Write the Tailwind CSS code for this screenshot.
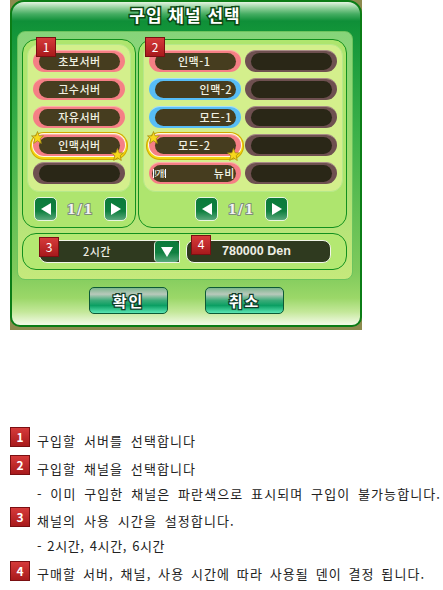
<!DOCTYPE html>
<html lang="ko">
<head>
<meta charset="utf-8">
<script src="https://cdn.jsdelivr.net/npm/@tailwindcss/browser@4"></script>
</head>
<body class="bg-white w-[443px] h-[590px] overflow-hidden font-['Noto_Sans_CJK_KR','Noto_Sans',sans-serif]">
<div class="ml-[10px] w-[352px] h-[330px] bg-[#8c8a4e]">
  <div class="w-[352px] h-[327px] rounded-t-[14px] rounded-b-[10px] border-2 border-[#0b7d16] bg-[linear-gradient(180deg,#e4f5e2_0px,#8fd09a_6px,#45ad62_12px,#0f8f38_19px,#129539_29px,#3bb049_130px,#7fca5c_270px,#9bd768_296px,#c4e89a_310px,#f1f9e4_322px)] relative">
    <div class="h-[29px] flex items-center justify-center pr-[2px] pb-[4px] text-[17px] font-bold leading-none tracking-[1px] text-white [-webkit-text-stroke:3px_#0d4a14] [paint-order:stroke_fill]">구입 채널 선택</div>

    <div class="ml-[5px] w-[336px] h-[249px] rounded-[8px] border border-[#6cc45e] bg-[linear-gradient(180deg,#86d47a_0px,#9cdc72_100px,#c6e97c_249px)] pt-[7px] px-[4px]">
      <div class="flex gap-[2px]">
        <div class="w-[114px] h-[189px] rounded-[14px] border border-[#12901e] bg-[#aee56e] pt-[4px] px-[4px]">
          <div class="w-[104px] h-[148px] rounded-[12px] border border-[#b6e88a] bg-[#d4ef8c] pt-[5px] pl-[5px] flex flex-col gap-[6px]">
            <div class="w-[92px] h-[22px] rounded-full bg-[#f57f85] border-t border-[#fbb0a8] pl-[6px] pr-[5px] pt-[2px] pb-[2px]"><div class="h-full rounded-full bg-[#463d1f] flex items-center justify-center text-[11px] font-medium leading-none tracking-[0.5px] text-[#f1f1e2]">초보서버</div></div>
            <div class="w-[92px] h-[22px] rounded-full bg-[#f57f85] border-t border-[#fbb0a8] pl-[6px] pr-[5px] pt-[2px] pb-[2px]"><div class="h-full rounded-full bg-[#463d1f] flex items-center justify-center text-[11px] font-medium leading-none tracking-[0.5px] text-[#f1f1e2]">고수서버</div></div>
            <div class="w-[92px] h-[22px] rounded-full bg-[#f57f85] border-t border-[#fbb0a8] pl-[6px] pr-[5px] pt-[2px] pb-[2px]"><div class="h-full rounded-full bg-[#463d1f] flex items-center justify-center text-[11px] font-medium leading-none tracking-[0.5px] text-[#f1f1e2]">자유서버</div></div>
            <div class="relative w-[92px] h-[22px] rounded-full bg-[#f57f85] border-t border-[#fbb0a8] pl-[6px] pr-[5px] pt-[2px] pb-[2px] shadow-[0_0_0_1px_#fffbe0,0_1px_0_2px_#f3d60e,0_1px_0_3px_#cfa900]">
              <div class="h-full rounded-full bg-[#463d1f] flex items-center justify-center text-[11px] font-medium leading-none tracking-[0.5px] text-[#f1f1e2]">인맥서버</div>
              <svg class="absolute left-[-2px] top-[-4px]" width="13" height="13" viewBox="0 0 24 24"><polygon points="12,1 15,9 23,9 17,14 19,23 12,18 5,23 7,14 1,9 9,9" fill="#f8d81c" stroke="#a88f10" stroke-width="1.5"/></svg>
              <svg class="absolute right-[1px] bottom-[-5px]" width="13" height="13" viewBox="0 0 24 24"><polygon points="12,1 15,9 23,9 17,14 19,23 12,18 5,23 7,14 1,9 9,9" fill="#f8d81c" stroke="#a88f10" stroke-width="1.5"/></svg>
            </div>
            <div class="w-[92px] h-[22px] rounded-full bg-[#6e5050] border-t border-[#a68a86] pl-[6px] pr-[5px] pt-[2px] pb-[2px]"><div class="h-full rounded-full bg-[#2a2717]"></div></div>
          </div>
          <div class="mt-[5px] w-[104px] flex items-center pl-[7px]">
            <div class="w-[23px] h-[24px] rounded-[5px] border border-[#e8f5e0] bg-[linear-gradient(180deg,#0b7a3a_0%,#0f8040_60%,#5aa97c_100%)] flex items-center justify-center"><svg width="12" height="14" viewBox="0 0 12 14"><polygon points="11,1 11,13 1,7" fill="#fff"/></svg></div>
            <div class="w-[47px] text-center text-[13px] font-bold leading-none tracking-[1.5px] text-[#f4f4f4] [-webkit-text-stroke:2px_#7f8f7a] [paint-order:stroke_fill] font-['DejaVu_Serif',serif]">1/1</div>
            <div class="w-[23px] h-[24px] rounded-[5px] border border-[#e8f5e0] bg-[linear-gradient(180deg,#0b7a3a_0%,#0f8040_60%,#5aa97c_100%)] flex items-center justify-center"><svg width="12" height="14" viewBox="0 0 12 14"><polygon points="1,1 1,13 11,7" fill="#fff"/></svg></div>
          </div>
        </div>

        <div class="w-[209px] h-[189px] rounded-[14px] border border-[#12901e] bg-[#aee56e] pt-[4px] px-[4px]">
          <div class="w-[200px] h-[148px] rounded-[12px] border border-[#b6e88a] bg-[#d4ef8c] pt-[5px] pl-[5px] grid grid-cols-[92px_92px] gap-x-[4px] gap-y-[6px] content-start">
            <div class="w-[92px] h-[22px] rounded-full bg-[#f57f85] border-t border-[#fbb0a8] pl-[6px] pr-[5px] pt-[2px] pb-[2px]"><div class="h-full rounded-full bg-[#463d1f] flex items-center pl-[23px] text-[11px] font-medium leading-none tracking-[0.5px] text-[#f1f1e2]">인맥-1</div></div>
            <div class="w-[92px] h-[22px] rounded-full bg-[#6e5050] border-t border-[#a68a86] pl-[6px] pr-[5px] pt-[2px] pb-[2px]"><div class="h-full rounded-full bg-[#2a2717]"></div></div>
            <div class="w-[92px] h-[22px] rounded-full bg-[#57bdf6] border-t border-[#a8defa] pl-[6px] pr-[5px] pt-[2px] pb-[2px]"><div class="h-full rounded-full bg-[#463d1f] flex items-center justify-end pr-[4px] text-[11px] font-medium leading-none tracking-[0.5px] text-[#f1f1e2]">인맥-2</div></div>
            <div class="w-[92px] h-[22px] rounded-full bg-[#6e5050] border-t border-[#a68a86] pl-[6px] pr-[5px] pt-[2px] pb-[2px]"><div class="h-full rounded-full bg-[#2a2717]"></div></div>
            <div class="w-[92px] h-[22px] rounded-full bg-[#57bdf6] border-t border-[#a8defa] pl-[6px] pr-[5px] pt-[2px] pb-[2px]"><div class="h-full rounded-full bg-[#463d1f] flex items-center justify-end pr-[4px] text-[11px] font-medium leading-none tracking-[0.5px] text-[#f1f1e2]">모드-1</div></div>
            <div class="w-[92px] h-[22px] rounded-full bg-[#6e5050] border-t border-[#a68a86] pl-[6px] pr-[5px] pt-[2px] pb-[2px]"><div class="h-full rounded-full bg-[#2a2717]"></div></div>
            <div class="relative w-[92px] h-[22px] rounded-full bg-[#f57f85] border-t border-[#fbb0a8] pl-[6px] pr-[5px] pt-[2px] pb-[2px] shadow-[0_0_0_1px_#fffbe0,0_1px_0_2px_#f3d60e,0_1px_0_3px_#cfa900]">
              <div class="h-full rounded-full bg-[#463d1f] flex items-center pl-[23px] text-[11px] font-medium leading-none tracking-[0.5px] text-[#f1f1e2]">모드-2</div>
              <svg class="absolute left-[-2px] top-[-4px]" width="13" height="13" viewBox="0 0 24 24"><polygon points="12,1 15,9 23,9 17,14 19,23 12,18 5,23 7,14 1,9 9,9" fill="#f8d81c" stroke="#a88f10" stroke-width="1.5"/></svg>
              <svg class="absolute right-[1px] bottom-[-5px]" width="13" height="13" viewBox="0 0 24 24"><polygon points="12,1 15,9 23,9 17,14 19,23 12,18 5,23 7,14 1,9 9,9" fill="#f8d81c" stroke="#a88f10" stroke-width="1.5"/></svg>
            </div>
            <div class="w-[92px] h-[22px] rounded-full bg-[#6e5050] border-t border-[#a68a86] pl-[6px] pr-[5px] pt-[2px] pb-[2px]"><div class="h-full rounded-full bg-[#2a2717]"></div></div>
            <div class="w-[92px] h-[22px] rounded-full bg-[#f57f85] border-t border-[#fbb0a8] pl-[3px] pr-[5px] pt-[2px] pb-[2px]"><div class="h-full rounded-full bg-[#463d1f] flex items-center justify-between pl-[1px] pr-[1px] text-[11px] font-medium leading-none text-[#f1f1e2]"><span class="border-x border-white text-[9px] tracking-[-1px]">!개!</span><span class="tracking-[0.5px]">뉴비</span></div></div>
            <div class="w-[92px] h-[22px] rounded-full bg-[#6e5050] border-t border-[#a68a86] pl-[6px] pr-[5px] pt-[2px] pb-[2px]"><div class="h-full rounded-full bg-[#2a2717]"></div></div>
          </div>
          <div class="mt-[5px] flex items-center pl-[52px]">
            <div class="w-[23px] h-[24px] rounded-[5px] border border-[#e8f5e0] bg-[linear-gradient(180deg,#0b7a3a_0%,#0f8040_60%,#5aa97c_100%)] flex items-center justify-center"><svg width="12" height="14" viewBox="0 0 12 14"><polygon points="11,1 11,13 1,7" fill="#fff"/></svg></div>
            <div class="w-[47px] text-center text-[13px] font-bold leading-none tracking-[1.5px] text-[#f4f4f4] [-webkit-text-stroke:2px_#7f8f7a] [paint-order:stroke_fill] font-['DejaVu_Serif',serif]">1/1</div>
            <div class="w-[23px] h-[24px] rounded-[5px] border border-[#e8f5e0] bg-[linear-gradient(180deg,#0b7a3a_0%,#0f8040_60%,#5aa97c_100%)] flex items-center justify-center"><svg width="12" height="14" viewBox="0 0 12 14"><polygon points="1,1 1,13 11,7" fill="#fff"/></svg></div>
          </div>
        </div>
      </div>

      <div class="relative mt-[5px] w-[325px] h-[37px] rounded-[14px] border border-[#12901e] bg-[#b4e872] pt-[6px] pl-[16px] flex gap-[6px]">
        <div class="relative w-[141px] h-[23px] rounded-[8px] rounded-r-none border border-[#f1f5e8] bg-[#2f3a1f] flex">
          <div class="flex-1 flex items-center justify-center text-[11px] font-medium leading-none tracking-[0.5px] text-[#eeeee4]">2시간</div>
          <div class="w-[25px] h-full border-l border-[#e8f0e0] rounded-[4px] bg-[linear-gradient(180deg,#0b7a3a_0%,#0f8040_55%,#5aa97c_100%)] flex items-center justify-center"><svg width="14" height="12" viewBox="0 0 14 12"><polygon points="1,1 13,1 7,11" fill="#fff"/></svg></div>
          <div class="absolute left-[-1px] top-[-4px] w-[20px] h-[20px] border border-[#7a0f12] bg-[linear-gradient(180deg,#d63a3a,#a81a1c)] flex items-center justify-center text-[12px] leading-none text-white">3</div>
        </div>
        <div class="relative w-[145px] h-[23px] rounded-[8px] border border-[#f1f5e8] bg-[#2f3a1f] flex items-center pl-[35px] text-[12.5px] font-bold leading-none text-[#eeeee4] font-['Liberation_Sans',sans-serif]">
          780000 Den
          <div class="absolute left-[4px] top-[-6px] w-[20px] h-[20px] border border-[#7a0f12] bg-[linear-gradient(180deg,#d63a3a,#a81a1c)] flex items-center justify-center text-[12px] font-normal leading-none text-white">4</div>
        </div>
      </div>
    </div>

    <div class="mt-[7px] pl-[77px] flex gap-[37px]">
      <div class="w-[79px] h-[27px] rounded-[5px] border border-[#0d5a36] bg-[linear-gradient(180deg,#7db58e_0%,#b9c9bb_25%,#3aab78_50%,#0b9f63_70%,#5ce6b4_100%)] flex items-center justify-center text-[15px] font-bold leading-none tracking-[2px] text-white [-webkit-text-stroke:2.5px_#123c28] [paint-order:stroke_fill]">확인</div>
      <div class="w-[79px] h-[27px] rounded-[5px] border border-[#0d5a36] bg-[linear-gradient(180deg,#7db58e_0%,#b9c9bb_25%,#3aab78_50%,#0b9f63_70%,#5ce6b4_100%)] flex items-center justify-center text-[15px] font-bold leading-none tracking-[2px] text-white [-webkit-text-stroke:2.5px_#123c28] [paint-order:stroke_fill]">취소</div>
    </div>

    <div class="absolute left-[24px] top-[35px] w-[20px] h-[20px] border border-[#7a0f12] bg-[linear-gradient(180deg,#d63a3a,#a81a1c)] flex items-center justify-center text-[12px] leading-none text-white">1</div>
    <div class="absolute left-[133px] top-[35px] w-[20px] h-[20px] border border-[#7a0f12] bg-[linear-gradient(180deg,#d63a3a,#a81a1c)] flex items-center justify-center text-[12px] leading-none text-white">2</div>
  </div>
</div>

<div class="mt-[97px] pl-[10px] text-[13px] leading-none text-[#222] tracking-[1.1px] [word-spacing:3px]">
  <div class="h-[28px] flex items-start gap-[7px]"><div class="w-[20px] h-[20px] border border-[#7a0f12] bg-[linear-gradient(180deg,#d63a3a,#a81a1c)] flex items-center justify-center text-[12px] font-bold leading-none text-white tracking-normal">1</div><span class="pt-[7px]">구입할 서버를 선택합니다</span></div>
  <div class="h-[26px] flex items-start gap-[7px]"><div class="w-[20px] h-[20px] border border-[#7a0f12] bg-[linear-gradient(180deg,#d63a3a,#a81a1c)] flex items-center justify-center text-[12px] font-bold leading-none text-white tracking-normal">2</div><span class="pt-[7px]">구입할 채널을 선택합니다</span></div>
  <div class="h-[26px] pl-[27px] pt-[6px] whitespace-nowrap">- 이미 구입한 채널은 파란색으로 표시되며 구입이 불가능합니다.</div>
  <div class="h-[26px] flex items-start gap-[7px]"><div class="w-[20px] h-[20px] border border-[#7a0f12] bg-[linear-gradient(180deg,#d63a3a,#a81a1c)] flex items-center justify-center text-[12px] font-bold leading-none text-white tracking-normal">3</div><span class="pt-[7px]">채널의 사용 시간을 설정합니다.</span></div>
  <div class="h-[26px] pl-[27px] pt-[6px] tracking-[0.6px] [word-spacing:1px]">- 2시간, 4시간, 6시간</div>
  <div class="h-[28px] flex items-start gap-[7px] pt-[2px] [word-spacing:2px]"><div class="w-[20px] h-[20px] border border-[#7a0f12] bg-[linear-gradient(180deg,#d63a3a,#a81a1c)] flex items-center justify-center text-[12px] font-bold leading-none text-white tracking-normal">4</div><span class="pt-[6px] whitespace-nowrap">구매할 서버, 채널, 사용 시간에 따라 사용될 덴이 결정 됩니다.</span></div>
</div>
</body>
</html>
